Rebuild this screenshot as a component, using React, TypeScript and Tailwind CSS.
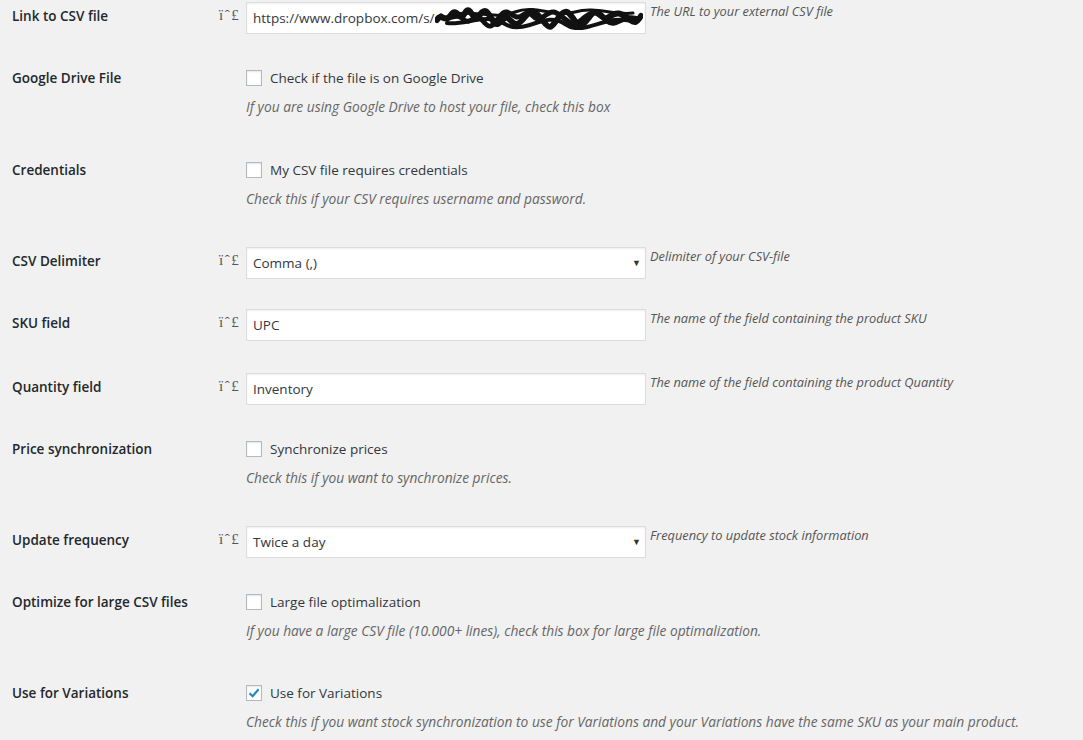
import { ReactNode } from "react";

type Field =
  | { kind: "text"; label: string; value: string; help: string; gap: number; redacted?: boolean }
  | { kind: "select"; label: string; value: string; help: string; gap: number }
  | { kind: "check"; label: string; option: string; help: string; gap: number; checked?: boolean };

const fields: Field[] = [
  { kind: "text", label: "Link to CSV file", value: "https://www.dropbox.com/s/", help: "The URL to your external CSV file", gap: 68, redacted: true },
  { kind: "check", label: "Google Drive File", option: "Check if the file is on Google Drive", help: "If you are using Google Drive to host your file, check this box", gap: 92 },
  { kind: "check", label: "Credentials", option: "My CSV file requires credentials", help: "Check this if your CSV requires username and password.", gap: 85 },
  { kind: "select", label: "CSV Delimiter", value: "Comma (,)", help: "Delimiter of your CSV-file", gap: 62 },
  { kind: "text", label: "SKU field", value: "UPC", help: "The name of the field containing the product SKU", gap: 64 },
  { kind: "text", label: "Quantity field", value: "Inventory", help: "The name of the field containing the product Quantity", gap: 68 },
  { kind: "check", label: "Price synchronization", option: "Synchronize prices", help: "Check this if you want to synchronize prices.", gap: 85 },
  { kind: "select", label: "Update frequency", value: "Twice a day", help: "Frequency to update stock information", gap: 68 },
  { kind: "check", label: "Optimize for large CSV files", option: "Large file optimalization", help: "If you have a large CSV file (10.000+ lines), check this box for large file optimalization.", gap: 91 },
  { kind: "check", label: "Use for Variations", option: "Use for Variations", help: "Check this if you want stock synchronization to use for Variations and your Variations have the same SKU as your main product.", gap: 60, checked: true },
];

// broken icon-font glyph that the plugin prints before tooltipped inputs
function TipGlyph() {
  return (
    <span className="pl-[12px] pt-[3px] text-[15px] leading-[20px] tracking-[1.5px] text-[#555] font-['Liberation_Serif',serif]">
      ïˆ£
    </span>
  );
}

function Scribble() {
  return (
    <svg width="208" height="24" viewBox="0 0 208 24" className="shrink-0">
      <g stroke="#111" fill="none" strokeLinecap="round" strokeLinejoin="round">
        <path
          d="M2 14 C6 6 10 18 16 9 S24 17 30 7 S38 19 44 10 S52 5 58 15 S68 7 74 13 S82 21 90 11 S100 5 108 15 S116 21 124 11 S134 7 140 15 S148 19 156 9 S166 17 174 11 S186 7 194 13 S202 15 206 10"
          strokeWidth="6"
        />
        <path
          d="M6 10 C14 17 20 5 28 13 S40 5 48 15 S58 19 66 9 S78 17 88 9 S98 19 108 11 S120 5 130 13 S140 19 150 11 S162 7 172 15 S186 7 204 13"
          strokeWidth="5"
        />
        <path d="M12 17 C30 20 50 6 70 18 S110 4 130 18 S170 6 200 16" strokeWidth="4" />
        <path d="M20 8 C40 4 60 14 80 6 S120 12 140 6 S180 10 198 7" strokeWidth="3" />
      </g>
    </svg>
  );
}

function Box({ children }: { children: ReactNode }) {
  return (
    <div className="flex h-[32px] w-[400px] items-center border border-[#ddd] bg-white px-[6px] text-[13.5px] text-[#32373c] shadow-[inset_0_1px_2px_rgba(0,0,0,0.07)]">
      {children}
    </div>
  );
}

function Row({ field }: { field: Field }) {
  const label =
    field.kind === "check" ? (
      <div className="-mt-[1px] w-[207px] shrink-0 pl-[12px] text-[13.5px] font-semibold leading-[18px] text-[#23282d]">{field.label}</div>
    ) : (
      <div className="w-[207px] shrink-0 pl-[12px] pt-[5px] text-[13.5px] font-semibold leading-[18px] text-[#23282d]">{field.label}</div>
    );

  return (
    <div className="flex shrink-0 items-start" style={{ height: field.gap }}>
      {label}
      {field.kind === "check" ? (
        <div className="flex flex-col pl-[39px]">
          <label className="flex items-center gap-[8px] text-[13.5px] leading-[16px] text-[#32373c]">
            <span className="relative flex h-[16px] w-[16px] items-center justify-center border border-[#b4b9be] bg-white shadow-[inset_0_1px_2px_rgba(0,0,0,0.1)]">
              {field.checked && (
                <svg width="14" height="14" viewBox="0 0 14 14" className="absolute">
                  <path d="M2.5 7.2 L5.6 10.2 L11.6 3.2" stroke="#1e8cbe" strokeWidth="2.2" fill="none" />
                </svg>
              )}
            </span>
            {field.option}
          </label>
          <p className="mt-[12px] whitespace-nowrap text-[13.75px] italic leading-[18px] text-[#666]">{field.help}</p>
        </div>
      ) : (
        <div className="flex items-start">
          <div className="flex w-[39px] shrink-0">
            <TipGlyph />
          </div>
          <Box>
            {field.kind === "text" ? (
              <>
                <span className="whitespace-nowrap">{field.value}</span>
                {field.redacted && <Scribble />}
              </>
            ) : (
              <>
                <span className="flex-1">{field.value}</span>
                <span className="mr-[-2px] text-[9px] text-[#333]">▼</span>
              </>
            )}
          </Box>
          <p className="ml-[4px] text-[12.8px] italic leading-[18px] text-[#555]">{field.help}</p>
        </div>
      )}
    </div>
  );
}

export default function App() {
  return (
    <div className="h-[740px] w-[1083px] overflow-hidden bg-[#f1f1f1] pt-[2px] font-['Open_Sans',sans-serif]">
      <div className="flex flex-col">
        {fields.map((f) => (
          <Row key={f.label} field={f} />
        ))}
      </div>
    </div>
  );
}
